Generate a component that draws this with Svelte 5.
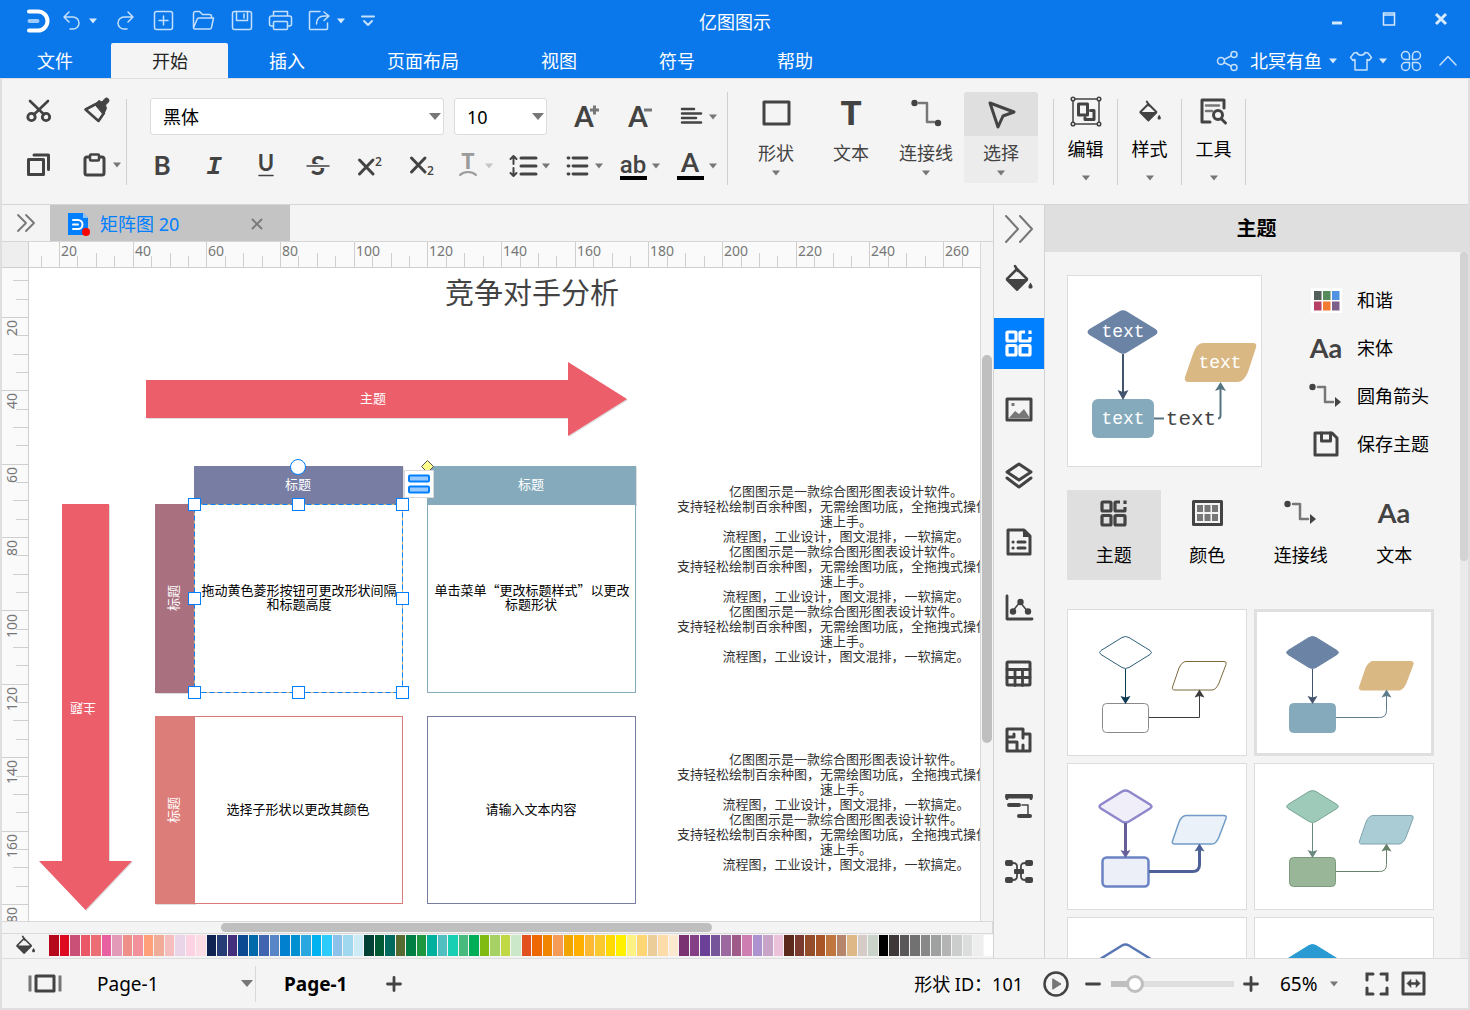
<script>
  const icons = {
    logo: '<path d="M3 3.500h9a9.500 9.500 0 0 1 0 19H3" stroke="#fff" stroke-width="4"/><path d="M3.500 13h8" stroke="#9dcbfb" stroke-width="4"/>',
    undo: '<path d="M7 2L2 7l5 5M2 7h9a6 6 0 0 1 0 12H8"/>',
    redo: '<path d="M13 2l5 5-5 5M18 7H9a6 6 0 0 0 0 12h3"/>',
    add: '<rect x="1.500" y="1.500" width="18" height="18" rx="2"/><path d="M10.500 6v9M6 10.500h9"/>',
    open: '<path d="M2.500 18V3.500a2 2 0 0 1 2-2h4l3 3h7a2 2 0 0 1 2 2V8M2.500 18L6 9.500a2 2 0 0 1 2-1.500h14.500l-2 9.500a2 2 0 0 1-2 1.500H3.500a1 1 0 0 1-1-1z"/>',
    save: '<rect x="1.500" y="1.500" width="19" height="18" rx="2"/><path d="M5.500 1.500v9h11v-9M13 4v4"/>',
    print: '<path d="M5.500 6V1.500h14V6M5.500 16h-2a2 2 0 0 1-2-2V8a2 2 0 0 1 2-2h18a2 2 0 0 1 2 2v6a2 2 0 0 1-2 2h-2"/><rect x="5.500" y="11.500" width="14" height="8" rx="1"/>',
    share: '<path d="M12 1.500H2.500a1 1 0 0 0-1 1v16a1 1 0 0 0 1 1h16a1 1 0 0 0 1-1V13M8.500 14c0-5 3-8 8-8h3M16 2l5 4-5 4.500"/>',
    more: '<path d="M1 1.500h12" stroke-width="2"/><path d="M3 6l4 4 4-4" stroke-width="2"/>',
    network: '<circle cx="5" cy="11" r="3.500"/><circle cx="18" cy="4.500" r="3"/><circle cx="18" cy="17.500" r="3"/><path d="M8 9.500l7-3.500M8 12.500l7 3.500"/>',
    shirt: '<path d="M7 1.500c1 3.500 7 3.500 8 0l3 .5 3.500 4.500-2.500 3-2-1V19H5V8.500l-2 1-2.500-3L4 2z"/>',
    apps: '<path d="M9.500 9.500H5.500a4 4 0 1 1 4-4zM12.500 9.500v-4a4 4 0 1 1 4 4zM9.500 12.500v4a4 4 0 1 1-4-4zM12.500 12.500h4a4 4 0 1 1-4 4z"/>',
    up: '<path d="M1 10l8-8.500L17 10"/>',
    cut: '<path d="M4 2L18 15.500M22 2L8 15.500" stroke-width="2.600"/><circle cx="5.500" cy="18" r="3.700" stroke-width="2.800"/><circle cx="20" cy="18" r="3.700" stroke-width="2.800"/>',
    brush: '<path d="M2.500 11.500L13 6l8 9-5.500 8z" stroke-width="2.600"/><path d="M12 6l4-3.500 3 1.500 3-3.500a2.500 2.500 0 0 1 3.500 3.500l-3 3 1 3.500-3 6z" fill="currentColor" stroke-width="1"/>',
    copy: '<rect x="1.500" y="6.500" width="15" height="15" stroke-width="3"/><path d="M7 2h14.500v14.500" stroke-width="3"/>',
    paste: '<rect x="2" y="4" width="19" height="18" rx="2" stroke-width="3"/><rect x="7" y="1.500" width="9" height="6" rx="1" fill="#f4f4f4" stroke-width="2.500"/>',
    bold: '<text x="12" y="21" text-anchor="middle" font-family="Lato" font-weight="700" font-size="26">B</text>',
    italic: '<text x="12" y="20" text-anchor="middle" font-family="Liberation Mono" font-weight="700" font-style="italic" font-size="26">I</text>',
    underline: '<text x="12" y="17" text-anchor="middle" font-family="Lato" font-weight="700" font-size="22">U</text><path d="M5 21.500h14" stroke-width="1.500"/>',
    strike: '<text x="12" y="21" text-anchor="middle" font-family="Lato" font-weight="700" font-size="26">S</text><path d="M1 12h22" stroke="#f4f4f4" stroke-width="4"/><path d="M1 12h22" stroke-width="1.500"/>',
    sup: '<path d="M1.500 6L15 20M15 6L1.500 20" stroke-width="3"/><text x="17" y="12" font-family="Open Sans" font-weight="600" font-size="12">2</text>',
    sub: '<path d="M1.500 4L15 18M15 4L1.500 18" stroke-width="3"/><text x="17" y="21" font-family="Open Sans" font-weight="600" font-size="12">2</text>',
    textfx: '<text x="12" y="15" text-anchor="middle" font-family="Liberation Mono" font-weight="700" font-size="23">T</text><path d="M4 21c4-4 12-4 16 0" stroke-width="2"/>',
    spacing: '<path d="M12 4h15M12 12h15M12 20h15" stroke-width="3"/><path d="M4.500 3v7M1.500 5l3-3 3 3M4.500 14v7M1.500 19l3 3 3-3" stroke-width="2"/>',
    bullets: '<path d="M7 4h14M7 12h14M7 20h14" stroke-width="2.800"/><path d="M2 4h1M2 12h1M2 20h1" stroke-width="2.800"/>',
    highlight: '<text x="14" y="21" text-anchor="middle" font-family="Roboto" font-weight="500" font-size="24">ab</text><path d="M1 26h27" stroke="#000" stroke-width="4" stroke-linecap="butt"/>',
    fontcolor: '<text x="14" y="20" text-anchor="middle" font-family="Lato" font-weight="700" font-size="26">A</text><path d="M1 26h27" stroke="#000" stroke-width="4" stroke-linecap="butt"/>',
    bigger: '<text x="10" y="22" text-anchor="middle" font-family="Lato" font-weight="700" font-size="28">A</text><path d="M16 5h9M20.500 0.500v9" stroke="#777" stroke-width="3" stroke-linecap="butt"/>',
    smaller: '<text x="12" y="22" text-anchor="middle" font-family="Lato" font-weight="700" font-size="28">A</text><path d="M18 5h8" stroke="#777" stroke-width="3" stroke-linecap="butt"/>',
    align: '<path d="M4 3h12M4 7.500h19M4 12h14M4 16.500h19" stroke-width="2.500"/>',
    shape: '<rect x="3" y="3" width="25" height="22" stroke-width="3"/>',
    text: '<text x="15" y="26" text-anchor="middle" font-family="Liberation Mono" font-weight="700" font-size="37">T</text>',
    connector: '<path d="M8 3h8v19h7" stroke="#777" stroke-width="2.500"/><circle cx="3.500" cy="3" r="3.200" fill="currentColor" stroke="none"/><circle cx="27" cy="23" r="3.200" fill="currentColor" stroke="none"/>',
    pointer: '<path d="M3 3l24 9-11 4-5 11z" stroke-width="3"/>',
    edit: '<rect x="3" y="3" width="26" height="25" stroke-width="1.500"/><g fill="#f4f4f4" stroke-width="1.500"><circle cx="3" cy="3" r="1.800"/><circle cx="29" cy="3" r="1.800"/><circle cx="3" cy="28" r="1.800"/><circle cx="29" cy="28" r="1.800"/></g><rect x="8.500" y="8" width="9" height="11" stroke-width="3"/><path d="M20.500 14.500h3.500v9h-9v-2" stroke-width="3"/>',
    bucket: '<path d="M13 5L3 15l4 3h12l4-3z" stroke-width="2.500"/><path d="M3 16h20L13 26z" fill="currentColor" stroke-width="2"/><path d="M11 2l3 5" stroke-width="2.500"/><path d="M26.500 18.500c3 4 2.500 6 0 6s-3-2 0-6z" fill="currentColor" stroke="none"/>',
    tools: '<path d="M11 25H3V3h22v8" stroke-width="3"/><path d="M7 8.500h13M7 14h6" stroke="#777" stroke-width="2.500"/><circle cx="19" cy="18" r="4.500" stroke-width="3"/><path d="M22.500 22l4 4" stroke-width="3"/>',
    expand: '<path d="M3 3l8 8-8 8M11 3l8 8-8 8" stroke-width="1.800"/>',
    expandbig: '<path d="M2 2l12 13L2 28M16 2l12 13-12 13" stroke-width="2"/>',
    doc: '<path d="M0 0h15l5 5v17H0z" fill="#007fff" stroke="none"/><path d="M15 0l5 5h-5z" fill="#8fc6ff" stroke="none"/><path d="M5 7h5a4 4 0 0 1 0 9H5M5 11.500h5" stroke="#fff" stroke-width="2"/><circle cx="18" cy="19" r="4" fill="#f00" stroke="none"/>',
    close: '<path d="M1.500 1.500l9 9M10.500 1.500l-9 9" stroke-width="1.800"/>',
    theme: '<rect x="2" y="2" width="9" height="9" rx="1" stroke-width="3.200"/><path d="M20 2h-4a1 1 0 0 0-1 1v7a1 1 0 0 0 1 1h8a1 1 0 0 0 1-1V7" stroke-width="3.200" stroke-linecap="butt"/><path d="M25 0.500v3.500" stroke-width="3.200" stroke-linecap="butt"/><rect x="2" y="15.500" width="9" height="9.500" rx="1" stroke-width="3.200"/><rect x="15" y="15.500" width="10" height="9.500" rx="1" stroke-width="3.200"/>',
    image: '<rect x="2" y="2" width="24" height="21" stroke-width="3"/><path d="M4 21l6-7 4 3 5-5 6 9z" fill="#777" stroke="none"/><rect x="6.500" y="6" width="3" height="3" fill="#777" stroke="none"/>',
    layers: '<path d="M14 2L26 10 14 18 2 10z" stroke-width="3"/><path d="M2 16l12 9 12-9" stroke-width="3"/>',
    notes: '<path d="M2 2h16l6 6v18H2z" stroke-width="3"/><path d="M17 2v7h7z" fill="currentColor" stroke="none"/><path d="M12 14h7M12 20h7M7 14h0.100M7 20h0.100" stroke-width="3"/>',
    chart: '<path d="M2 2v23h25" stroke-width="2.800"/><path d="M7 18l8-10 8 10" stroke-width="1.500"/><g fill="currentColor" stroke="none"><circle cx="8" cy="17.500" r="3.200"/><circle cx="15.500" cy="8" r="3.200"/><circle cx="23" cy="17.500" r="3.200"/></g>',
    table: '<rect x="2" y="2" width="23" height="23" rx="1" stroke-width="3"/><path d="M2 9.500h23M2 17.500h23M10 9.500v16M17.500 9.500v16" stroke-width="2.800"/>',
    plan: '<path d="M2 2h16v5h7v17H2zM2 10h7V7M2 15h10v9M18 7v4M18 18v6" stroke-width="3"/>',
    gantt: '<path d="M2 5.500V2.500h24v3" stroke-width="3" stroke-linejoin="miter"/><path d="M2 3.500h24" stroke-width="4"/><path d="M17 12h6v9" stroke-width="1.500"/><path d="M4 12h10M14 23h11" stroke-width="4"/>',
    mind: '<g fill="currentColor" stroke="none"><rect x="0" y="1" width="8" height="6" rx="2"/><rect x="20" y="1" width="8" height="6" rx="2"/><rect x="0" y="18" width="8" height="6" rx="2"/><rect x="20" y="18" width="8" height="6" rx="2"/><rect x="9" y="10" width="10" height="5" rx="1"/></g><path d="M8 4c5 0 4 3 4 8s1 9-4 9M20 4c-5 0-4 3-4 8s-1 9 4 9" stroke-width="1.800"/>',
    swatches: '<rect x="0" y="0" width="31" height="25" fill="#fff" stroke="none"/><g stroke="none"><rect x="3" y="3" width="7.500" height="9" fill="#545f5c"/><rect x="12" y="3" width="7.500" height="9" fill="#568b5b"/><rect x="21" y="3" width="7.500" height="9" fill="#4f93e2"/><rect x="3" y="13.500" width="7.500" height="9" fill="#b54063"/><rect x="12" y="13.500" width="7.500" height="9" fill="#f37a31"/><rect x="21" y="13.500" width="7.500" height="9" fill="#7d5f8c"/></g>',
    font: '<text x="16" y="23" text-anchor="middle" font-family="Lato" font-weight="700" font-size="27">Aa</text>',
    route: '<path d="M9 4h7v15h8" stroke="#777" stroke-width="2.500"/><circle cx="3.500" cy="4" r="3.200" fill="currentColor" stroke="none"/><path d="M26 14l6 5-6 5z" fill="currentColor" stroke="none"/>',
    disk: '<path d="M2 2h17l5 5v17H2z" stroke-width="3"/><path d="M8.500 2v8h9V2" stroke-width="3"/>',
    colors: '<rect x="1.500" y="1.500" width="28" height="23" stroke-width="3"/><g fill="#777" stroke="none"><rect x="5" y="5" width="6" height="7"/><rect x="12.500" y="5" width="6" height="7"/><rect x="20" y="5" width="6" height="7"/><rect x="5" y="14" width="6" height="7"/><rect x="12.500" y="14" width="6" height="7"/><rect x="20" y="14" width="6" height="7"/></g>',
    pages: '<path d="M2 1.500v16M32 1.500v16" stroke="#777" stroke-width="3" stroke-linecap="butt"/><rect x="8" y="2" width="18" height="15" stroke-width="3"/>',
    plus: '<path d="M8 1.500v13M1.500 8h13" stroke-width="2.800"/>',
    minus: '<path d="M1.500 8h13" stroke-width="2.800"/>',
    play: '<circle cx="13" cy="13" r="11.500" stroke-width="2.500"/><path d="M10 8l8 5-8 5z" fill="#777" stroke="#777" stroke-width="1"/>',
    full: '<path d="M2 8V2h6M16 2h6v6M22 16v6h-6M8 22H2v-6" stroke-width="3" stroke-linejoin="miter"/>',
    fit: '<rect x="2" y="2" width="21" height="21" stroke-width="3"/><path d="M8 12.500h9" stroke-width="2.500"/><path d="M10 8.500v8l-4-4zM15 8.500v8l4-4z" fill="currentColor" stroke-width="0.500"/>'
  };

  const menus = ['插入', '页面布局', '视图', '符号', '帮助'];
  const rail = [['bucket', '填充', 30, 28], ['theme', '主题', 27, 27], ['image', '图片', 28, 25], ['layers', '图层', 28, 27], ['notes', '页面', 26, 28], ['chart', '图表', 28, 27], ['table', '表格', 27, 27], ['plan', '平面图', 27, 26], ['gantt', '甘特图', 28, 26], ['mind', '思维导图', 28, 25]];
  const options = [['swatches', '和谐', 31, 25], ['font', '宋体', 32, 26], ['route', '圆角箭头', 34, 26], ['disk', '保存主题', 26, 26]];
  const themeTabs = [['theme', '主题', 27, 27], ['colors', '颜色', 31, 26], ['route', '连接线', 34, 26], ['font', '文本', 32, 26]];

  const palette = ('b5081b dd0a20 cb5078 ea5766 ec6e74 e8609f e399b8 ef8f8a f2909b ffa07a f0ac96 f5bdbd ead5e8 fdd3e4 fddde5 0f2352 263c74 432f7c 0b4a90 0069aa 4164b0 5885c6 0080cf 0090d2 2ba7e0 00b3f0 2dcbfc 8cc1ea a0d8ef cdebf6 004035 005933 00695e 556b2f 007f45 1c963f 00b09f 51bec1 19cfb3 48ba7e 00ae57 80bb11 a5d165 bfd843 cbe8c8 e2501f ed6800 f18500 f39b57 f0a500 ffaf00 fdb933 fac92f ffd900 fff000 fdf283 ffd673 ebcd9a fedcaa fde8d0 7b3272 843f86 6a4196 77559b 9b689f a05a8a cf7eb2 ac92cf c8a4c9 ecc1da 5c2a1c 7a3a2f 944d2a a95528 c0773f b5866c dfb887 d6cbc6 cad3ca 000000 3e3838 595758 717171 888888 9fa0a0 b4b4b5 cccdcd dcdddd eeeeee ffffff').split(' ');

  const thumbs = [
    { d: ['#fff', '#2f6079'], p: ['#fff', '#7b6a3d'], r: ['#fff', '#8a8a8a'], a: '#0c3a53', b: '#3d3d3d', w: 1, lw: 1, bend: 0 },
    { d: ['#6b83a4', '#6b83a4'], p: ['#d9b884', '#d9b884'], r: ['#84aabc', '#84aabc'], a: '#44546c', b: '#5d7d8b', w: 1, lw: 1, bend: 7, on: true },
    { d: ['#f0eff9', '#8f87cc'], p: ['#ebf1f9', '#719cc7'], r: ['#eceff8', '#6b83c4'], a: '#675f9b', b: '#4d6196', w: 2.5, lw: 3, bend: 7 },
    { d: ['#9dcab9', '#78a594'], p: ['#a9ccd5', '#7fa3ac'], r: ['#99b798', '#7b9b7b'], a: '#6a8a80', b: '#66806a', w: 1, lw: 1, bend: 7 },
    { d: ['#fff', '#5776b4'], p: ['#fff', '#5776b4'], r: ['#fff', '#5776b4'], a: '#44546c', b: '#44546c', w: 2.5, lw: 2, bend: 7 },
    { d: ['#299bd2', '#299bd2'], p: ['#299bd2', '#299bd2'], r: ['#299bd2', '#299bd2'], a: '#44546c', b: '#44546c', w: 1, lw: 1, bend: 7 }
  ];

  const A = '亿图图示是一款综合图形图表设计软件。';
  const B = '支持轻松绘制百余种图，无需绘图功底，全拖拽式操作，快';
  const block = [A, B, '速上手。', '流程图，工业设计，图文混排，一软搞定。'];
  const upper = [...block, ...block, ...block];
  const lower = [...block, ...block];

  const handles = [[194, 504], [298, 504], [402, 504], [194, 598], [402, 598], [194, 692], [298, 692], [402, 692]];
  const ticks = Array.from({ length: 120 }, (_, i) => i - 4);
  const tickStart = (i) => (i % 4 === 0 ? 0 : i % 2 === 0 ? 11 : 14);
  const across = Array.from({ length: 13 }, (_, i) => i);
  const down = Array.from({ length: 9 }, (_, i) => i);

  let font = $state('黑体');
  let size = $state('10');
  let page = $state('Page-1');
  let zoom = $state('65%');
  let level = $state(14);
</script>

{#snippet icon(name, w, h, scale = 1)}
  <svg class="icon" width={w * scale} height={h * scale} viewBox="0 0 {w} {h}" aria-hidden="true">{@html icons[name]}</svg>
{/snippet}

{#snippet caret()}
  <svg class="caret" width="10" height="6" viewBox="0 0 10 6" aria-hidden="true"><path d="M1 0.500h8L5 5.500z" /></svg>
{/snippet}

{#snippet flow(t)}
  <path d="M55 28.500Q58.500 26.500 62 28.500L83 41.500Q86 43.500 83 45.500L62 58.500Q58.500 60.500 55 58.500L34 45.500Q31 43.500 34 41.500z" fill={t.d[0]} stroke={t.d[1]} stroke-width={t.w} />
  <path d="M119 52.500H157Q160 52.500 159 55.500L152 74Q149 81 145 81H108Q104.500 81 105.500 78L112 59Q115 52.500 119 52.500z" fill={t.p[0]} stroke={t.p[1]} stroke-width={Math.min(t.w, 1.5)} />
  <rect x="35.500" y="94.500" width="46" height="29" rx="4" fill={t.r[0]} stroke={t.r[1]} stroke-width={t.w} />
  <path d="M58.500 60V90" stroke={t.a} stroke-width={t.lw} fill="none" />
  <path d="M53.500 87l5 1.500 5-1.500-5 8z" fill={t.a} />
  <path d="M82 108.500H{132.500 - t.bend}q{t.bend} 0 {t.bend} -{t.bend}V86" stroke={t.b} stroke-width={t.lw} fill="none" />
  <path d="M127.500 88.500l5-1.500 5 1.500-5-8z" fill={t.b} />
{/snippet}

<div class="app">
  <header>
    <div class="titlebar">
      <div class="quick">
        {@render icon('logo', 24, 26)}
        <button class="split undo" aria-label="撤销">{@render icon('undo', 20, 21)}{@render caret()}</button>
        <button class="q" aria-label="重做">{@render icon('redo', 20, 21)}</button>
        <button class="q" aria-label="新建">{@render icon('add', 21, 21)}</button>
        <button class="q" aria-label="打开">{@render icon('open', 24, 21)}</button>
        <button class="q" aria-label="保存">{@render icon('save', 22, 21)}</button>
        <button class="q" aria-label="打印">{@render icon('print', 25, 21)}</button>
        <button class="split export" aria-label="导出">{@render icon('share', 22, 21)}{@render caret()}</button>
        <button aria-label="更多">{@render icon('more', 14, 12)}</button>
      </div>
      <h1>亿图图示</h1>
      <div class="window">
        <button aria-label="最小化"><svg width="14" height="14" viewBox="0 0 14 14"><path d="M2 11h10" stroke="#d5e8fc" stroke-width="3" /></svg></button>
        <button aria-label="最大化"><svg width="14" height="14" viewBox="0 0 14 14"><path d="M1.500 1h11v12h-11zM1 3h12" fill="none" stroke="#d5e8fc" stroke-width="1.500" /></svg></button>
        <button aria-label="关闭"><svg width="14" height="14" viewBox="0 0 14 14"><path d="M2 2l10 10M12 2L2 12" stroke="#d5e8fc" stroke-width="3" /></svg></button>
      </div>
    </div>
    <nav class="menubar">
      <button class="file">文件</button>
      <button class="current">开始</button>
      {#each menus as m}<button>{m}</button>{/each}
      <div class="account">
        <button aria-label="分享">{@render icon('network', 22, 22)}</button>
        <button class="split name">北冥有鱼{@render caret()}</button>
        <button class="split" aria-label="皮肤">{@render icon('shirt', 22, 20)}{@render caret()}</button>
        <button class="apps" aria-label="应用">{@render icon('apps', 22, 22)}</button>
        <button aria-label="收起">{@render icon('up', 18, 12)}</button>
      </div>
    </nav>
  </header>

  <div class="frame">
    <section class="ribbon">
      <div class="clip">
        <button aria-label="剪切">{@render icon('cut', 26, 24)}</button>
        <button class="second" aria-label="格式刷">{@render icon('brush', 27, 26)}</button>
        <button aria-label="复制">{@render icon('copy', 24, 24)}</button>
        <button class="split second" aria-label="粘贴">{@render icon('paste', 23, 24)}{@render caret()}</button>
      </div>
      <div class="fonts">
        <div class="line">
          <label class="pick family"><select aria-label="字体" bind:value={font}><option>黑体</option><option>宋体</option></select><svg width="12" height="8" viewBox="0 0 12 8"><path d="M0 0h12L6 7z" /></svg></label>
          <label class="pick size"><select aria-label="字号" bind:value={size}><option>10</option><option>12</option></select><svg width="12" height="8" viewBox="0 0 12 8"><path d="M0 0h12L6 7z" /></svg></label>
          <div class="sizes">
            <button aria-label="增大字号">{@render icon('bigger', 26, 24)}</button>
            <button aria-label="减小字号">{@render icon('smaller', 26, 24)}</button>
            <button class="split" aria-label="对齐">{@render icon('align', 26, 22)}{@render caret()}</button>
          </div>
        </div>
        <div class="line">
          <div class="styles">
            {#each [['bold', '加粗'], ['italic', '斜体'], ['underline', '下划线'], ['strike', '删除线'], ['sup', '上标'], ['sub', '下标']] as [n, l]}
              <button aria-label={l}>{@render icon(n, 24, 24)}</button>
            {/each}
          </div>
          <div class="splits">
            <button class="split dim" aria-label="文字效果" disabled>{@render icon('textfx', 24, 24)}{@render caret()}</button>
            <button class="split" aria-label="行距">{@render icon('spacing', 28, 24)}{@render caret()}</button>
            <button class="split" aria-label="项目符号">{@render icon('bullets', 24, 24)}{@render caret()}</button>
            <button class="split" aria-label="突出显示">{@render icon('highlight', 28, 28)}{@render caret()}</button>
            <button class="split" aria-label="字体颜色">{@render icon('fontcolor', 28, 28)}{@render caret()}</button>
          </div>
        </div>
      </div>
      <div class="tools">
        <button>{@render icon('shape', 30, 30)}<span>形状</span>{@render caret()}</button>
        <button>{@render icon('text', 30, 31)}<span>文本</span></button>
        <button>{@render icon('connector', 30, 28)}<span>连接线</span>{@render caret()}</button>
        <button class="chosen">{@render icon('pointer', 28, 29)}<span>选择</span>{@render caret()}</button>
      </div>
      <div class="more">
        <button>{@render icon('edit', 32, 31)}<span>编辑</span>{@render caret()}</button>
        <button>{@render icon('bucket', 30, 28, 0.8)}<span>样式</span>{@render caret()}</button>
        <button>{@render icon('tools', 29, 29)}<span>工具</span>{@render caret()}</button>
      </div>
    </section>

    <main>
      <section class="work">
        <div class="doctabs">
          <button class="open" aria-label="展开">{@render icon('expand', 22, 22)}</button>
          <div class="doctab">
            {@render icon('doc', 23, 22)}
            <span>矩阵图 20</span>
            <button aria-label="关闭文档">{@render icon('close', 12, 12)}</button>
          </div>
        </div>
        <div class="board">
          <div class="corner"></div>
          <div class="ruler across">
            <svg width="100%" height="25">
              {#each ticks as i}
                <path d="M{Math.floor(30.5 + i * 18.42) + 0.5} {tickStart(i)}V25" stroke="#cfcfcf" />
              {/each}
              {#each across as i}<text x={32 + Math.round(i * 73.68)} y="14">{20 + i * 20}</text>{/each}
            </svg>
          </div>
          <div class="ruler down">
            <svg width="26" height="100%">
              {#each ticks as i}
                <path d="M{tickStart(i)} {Math.floor(49.5 + i * 18.34) + 0.5}H26" stroke="#cfcfcf" />
              {/each}
              {#each down as i}<text text-anchor="end" transform="translate(15 {52 + Math.round(i * 73.4)}) rotate(-90)">{20 + i * 20}</text>{/each}
            </svg>
          </div>
          <div class="canvas">
            <svg width="100%" height="100%">
              <g transform="translate(-29 -268)">
                <text class="heading" x="532" y="304">竞争对手分析</text>
                <g class="solid">
                  <path d="M146 380H568V362L627 399L568 436V418H146z" fill="#ed5e6b" />
                  <path d="M62 504H109V861H132L85.500 910L39 861H62z" fill="#ed5e6b" />
                  <path d="M194 466h209v39h-209z" fill="#777da3" />
                  <path d="M427 466h209v39h-209z" fill="#85aabc" />
                  <path d="M155 504h40v189h-40z" fill="#a9707f" />
                  <path d="M155 716h40v188h-40z" fill="#dd7d7a" />
                </g>
                <rect x="427.500" y="504.500" width="208" height="188" class="box" stroke="#85aabc" />
                <rect x="194.500" y="716.500" width="208" height="187" class="box" stroke="#d87b79" />
                <rect x="427.500" y="716.500" width="208" height="187" class="box" stroke="#777da3" />
                <rect x="194.500" y="504.500" width="208" height="188" class="box" stroke="#d9b884" />
                <g class="light">
                  <text x="373" y="403">主题</text>
                  <text transform="translate(83 704) rotate(180)">主题</text>
                  <text x="298" y="489">标题</text>
                  <text x="531" y="489">标题</text>
                  <text transform="translate(178 598) rotate(-90)">标题</text>
                  <text transform="translate(178 810) rotate(-90)">标题</text>
                </g>
                <g class="dark">
                  <text x="299" y="595">拖动黄色菱形按钮可更改形状间隔</text>
                  <text x="299" y="609">和标题高度</text>
                  <text x="532" y="595">单击菜单“更改标题样式”以更改</text>
                  <text x="531" y="609">标题形状</text>
                  <text x="298" y="814">选择子形状以更改其颜色</text>
                  <text x="531" y="814">请输入文本内容</text>
                </g>
                <g class="body">
                  {#each upper as line, i}<text x="846" y={496 + i * 15}>{line}</text>{/each}
                  {#each lower as line, i}<text x="846" y={764 + i * 15}>{line}</text>{/each}
                </g>
                <path d="M427.500 460.500l6 6-6 6-6-6z" fill="#ffff8c" stroke="#555" />
                <rect x="404.500" y="470.500" width="29" height="27" fill="#fff" stroke="#d9d9d9" />
                <rect x="409" y="475.500" width="20" height="6" rx="1" class="bar" />
                <rect x="409" y="486.500" width="20" height="6" rx="1" class="bar" />
                <rect x="194.500" y="504.500" width="208" height="188" class="selection" />
                <circle cx="298" cy="467" r="7.500" class="handle" />
                {#each handles as [x, y]}<rect x={x - 5.5} y={y - 5.5} width="12" height="12" class="handle" />{/each}
              </g>
            </svg>
          </div>
          <div class="vscroll"><i></i></div>
          <div class="hscroll"><i></i></div>
        </div>
        <div class="palette">
          <button class="fill" aria-label="填充颜色">{@render icon('bucket', 30, 28, 0.7)}</button>
          <div class="chips">{#each palette as c}<button aria-label="#{c}" style="background:#{c}"></button>{/each}</div>
        </div>
      </section>

      <aside class="rail">
        <button class="top" aria-label="收起面板">{@render icon('expandbig', 30, 30)}</button>
        {#each rail as [n, l, w, h], i}<button class:on={i === 1} aria-label={l}>{@render icon(n, w, h)}</button>{/each}
      </aside>

      <aside class="panel">
        <h2>主题</h2>
        <div class="scroll">
          <div class="inner">
            <div class="summary">
              <div class="preview">
                <svg width="193" height="190" viewBox="1 1 193 190">
                  <path d="M52 36.500Q56 34 60 36.500L88.500 54Q92.500 57 88.500 60L60 77.500Q56 80 52 77.500L22.500 60Q18.500 57 22.500 54z" fill="#6b83a4" />
                  <path d="M136 68H186Q190.500 68 189 72.500L181 97Q177 107 170 107H122Q116.500 107 118 102L126 79Q129.500 68 136 68z" fill="#d9b884" />
                  <rect x="25" y="124" width="62" height="39" rx="6" fill="#84aabc" />
                  <path d="M56 79V119" stroke="#44546c" stroke-width="2" />
                  <path d="M50.500 115l5.500 2 5.500-2L56 125z" fill="#44546c" />
                  <path d="M87 143.500h10M151 143.500q2.500 0 2.500-3V112" fill="none" stroke="#557480" stroke-width="2" />
                  <path d="M148 116l5.500-2 5.500 2-5.500-9z" fill="#557480" />
                  <text class="mono" x="56" y="62">text</text>
                  <text class="mono" x="153" y="93">text</text>
                  <text class="mono" x="56" y="149">text</text>
                  <text class="mono large" x="124" y="150">text</text>
                </svg>
              </div>
              <div class="options">
                {#each options as [n, l, w, h]}
                  <button><span class="slot">{@render icon(n, w, h)}</span>{l}</button>
                {/each}
              </div>
            </div>
            <div class="tabs">
              {#each themeTabs as [n, l, w, h], i}
                <button class:on={i === 0}><span class="slot">{@render icon(n, w, h)}</span>{l}</button>
              {/each}
            </div>
            <div class="thumbs">
              {#each thumbs as t, i}
                <button class:on={t.on} aria-label="主题 {i + 1}"><svg width="180" height="147" viewBox="0 0 180 147">{@render flow(t)}</svg></button>
              {/each}
            </div>
          </div>
          <div class="bar"><i></i></div>
        </div>
      </aside>
    </main>

    <footer>
      <button class="view" aria-label="页面视图">{@render icon('pages', 34, 19)}</button>
      <label class="pages"><select aria-label="页面" bind:value={page}><option>Page-1</option></select><svg width="12" height="8" viewBox="0 0 12 8"><path d="M0 0h12L6 7z" /></svg></label>
      <button class="pagetab">Page-1</button>
      <button aria-label="新增页面">{@render icon('plus', 16, 16)}</button>
      <div class="right">
        <span>形状 ID：101</span>
        <button class="play" aria-label="播放">{@render icon('play', 26, 26)}</button>
        <button aria-label="缩小">{@render icon('minus', 16, 16)}</button>
        <input type="range" aria-label="缩放" min="0" max="100" bind:value={level} />
        <button aria-label="放大">{@render icon('plus', 16, 16)}</button>
        <label class="zoom"><select aria-label="缩放比例" bind:value={zoom}><option>65%</option><option>100%</option></select>{@render caret()}</label>
        <button aria-label="全屏">{@render icon('full', 24, 24)}</button>
        <button aria-label="适应宽度">{@render icon('fit', 25, 25)}</button>
      </div>
    </footer>
  </div>
</div>

<style>
  :global(body) { margin: 0; }
  .app { height: 100vh; min-height: 800px; display: flex; flex-direction: column; overflow: hidden; background: #f4f4f4; color: #000; font: 18px/24px "Noto Sans", "Noto Sans CJK SC", sans-serif; }
  .app * { box-sizing: border-box; }
  button { border: 0; padding: 0; margin: 0; background: none; font: inherit; color: #434343; display: flex; align-items: center; justify-content: center; flex: none; white-space: nowrap; }
  svg { display: block; flex: none; }
  .icon { fill: none; stroke: currentColor; stroke-width: 1.5; stroke-linecap: round; stroke-linejoin: round; overflow: visible; }
  .icon :global(text) { fill: currentColor; stroke: none; }
  .caret { fill: #777; }
  .split { gap: 4px; }

  header { background: #0a78eb; color: #fff; flex: none; }
  header button { color: #c4dffb; }
  header .caret { fill: #d5e8fc; }
  .titlebar { height: 43px; display: grid; grid-template-columns: 1fr auto 1fr; align-items: center; }
  .quick { display: flex; align-items: center; padding: 0 0 2px 26px; }
  .undo { margin: 0 7px 0 12px; gap: 6px; }
  .q { width: 39px; }
  .export { padding: 0 15px 0 8px; gap: 6px; }
  h1 { margin: 0; font-size: 18px; font-weight: 400; line-height: 24px; }
  .window { display: flex; justify-content: flex-end; align-items: center; gap: 38px; padding: 0 22px 6px 0; }
  .menubar { height: 35px; display: flex; align-items: stretch; }
  .menubar > button { color: #fff; padding: 0 41px; }
  .menubar > .file { padding: 0 38px 0 37px; }
  .menubar > .current { background: #f4f4f4; color: #222; border-radius: 2px 2px 0 0; padding: 0 40px 0 41px; }
  .account { margin-left: auto; display: flex; align-items: center; gap: 12px; padding-right: 13px; }
  .account .split { gap: 6px; }
  .account .name { color: #fff; }
  .account .apps { margin-right: 5px; }

  .frame { flex: 1; min-height: 0; display: flex; flex-direction: column; border: 2px solid #dfdfdf; border-top-width: 1px; }
  .ribbon { flex: none; display: flex; height: 126px; border-bottom: 1px solid #d6d6d6; padding-top: 13px; }
  .clip { display: grid; grid-template-columns: 48px 40px; column-gap: 20px; grid-template-rows: 24px 24px; row-gap: 30px; width: 125px; height: 86px; margin-top: 7px; padding-left: 13px; border-right: 1px solid #d0d0d0; align-content: start; align-items: center; }
  .clip .second { justify-content: flex-start; }
  .clip .split { gap: 6px; }
  .fonts { display: flex; flex-direction: column; gap: 17px; padding: 6px 9px 0 23px; height: 93px; border-right: 1px solid #d0d0d0; }
  .line { display: flex; align-items: center; }
  .pick { position: relative; display: block; border: 1px solid #dcdcdc; border-radius: 3px; background: #fff; height: 37px; }
  .family { width: 294px; margin-right: 10px; }
  .size { width: 93px; }
  select { appearance: none; border: 0; background: transparent; font: inherit; width: 100%; height: 100%; padding: 0 12px; color: #000; }
  .pick svg, .pages svg { position: absolute; right: 2px; top: 14px; fill: #777; pointer-events: none; }
  .sizes { display: flex; align-items: center; gap: 26px; margin-left: 27px; }
  .styles { display: flex; gap: 28px; height: 28px; margin-right: 22px; }
  .splits { display: flex; align-items: center; gap: 15px; }
  .dim { color: #9a9a9a; }
  .dim .caret { fill: #c4c4c4; }
  .tools { display: flex; gap: 1px; padding: 0 15px 0 11px; }
  .tools button { width: 74px; height: 91px; display: grid; grid-template-rows: 44px 34px 13px; justify-items: center; align-items: center; border-radius: 3px; }
  .tools .chosen { background: linear-gradient(#dfdfdf 44px, #ececec 44px); }
  .tools .caret { align-self: start; }
  .more { display: flex; height: 86px; margin-top: 7px; border-left: 1px solid #d0d0d0; }
  .more button { width: 64px; border-right: 1px solid #d0d0d0; display: grid; grid-template-rows: 24px 52px 6px; align-content: start; justify-items: center; align-items: center; }
  .more span { color: #000; }

  main { flex: 1; min-height: 0; display: flex; }
  .work { flex: 1; min-width: 0; display: flex; flex-direction: column; }
  .doctabs { display: flex; height: 37px; border-bottom: 1px solid #d6d6d6; flex: none; }
  .doctabs .open { width: 48px; color: #777; }
  .doctab { width: 240px; background: #c4c4c4; display: flex; align-items: center; padding: 1px 27px 0 18px; color: #007fff; }
  .doctab span { margin-left: 9px; flex: 1; }
  .doctab button { color: #777; }
  .board { flex: 1; min-height: 0; display: grid; grid-template-columns: 27px 1fr 13px; grid-template-rows: 26px 1fr 13px; }
  .corner { background: #eee; border-right: 1px solid #cfcfcf; border-bottom: 1px solid #cfcfcf; }
  .ruler { background: #fafafa; overflow: hidden; min-width: 0; min-height: 0; }
  .ruler text { font-size: 14px; fill: #777; }
  .across { border-bottom: 1px solid #cfcfcf; }
  .down { border-right: 1px solid #cfcfcf; grid-row: 2; }
  .canvas { grid-column: 2; grid-row: 2; background: #fff; overflow: hidden; min-width: 0; min-height: 0; font-family: "Noto Sans CJK SC", sans-serif; font-size: 13px; text-anchor: middle; }
  .heading { font-size: 29px; fill: #434343; }
  .solid { filter: drop-shadow(1px 1px 0 rgba(120, 120, 120, 0.25)); }
  .box { fill: #fff; }
  .light { fill: #fff; }
  .body { fill: #333; }
  .canvas .bar { fill: #99caff; stroke: #0080ff; stroke-width: 2; }
  .selection { fill: none; stroke: #0080ff; stroke-width: 1; stroke-dasharray: 5 3; }
  .handle { fill: #fff; stroke: #0080ff; }
  .vscroll { grid-column: 3; grid-row: 1 / 3; border-left: 1px solid #d9d9d9; padding: 113px 1px 0 1px; }
  .vscroll i { display: block; height: 388px; border-radius: 5px; background: #bfbfbf; }
  .hscroll { grid-column: 1 / 4; border: 1px solid #d9d9d9; border-left: 0; padding: 1px 280px 0 219px; }
  .hscroll i { display: block; height: 9px; border-radius: 5px; background: #bfbfbf; }
  .palette { height: 24px; flex: none; display: flex; align-items: center; padding-bottom: 2px; }
  .fill { width: 47px; }
  .chips { flex: 1; display: flex; gap: 1px; height: 21px; }
  .chips button { flex: 1; }

  .rail { width: 52px; flex: none; border: 1px solid #d3d3d3; border-width: 0 1px; display: flex; flex-direction: column; gap: 15px; overflow: hidden; }
  .rail button { height: 51px; padding-right: 1px; }
  .rail .top { height: 47px; margin-bottom: -15px; color: #777; }
  .rail .on { background: #007fff; color: #fff; }
  .panel { width: 423px; flex: none; display: flex; flex-direction: column; min-height: 0; }
  h2 { margin: 0; height: 47px; flex: none; background: #dfdfdf; font-size: 20px; line-height: 48px; font-weight: 700; text-align: center; }
  .scroll { flex: 1; min-height: 0; display: flex; overflow: hidden; }
  .inner { flex: 1; padding: 23px 19px 0 22px; }
  .summary { display: flex; justify-content: space-between; }
  .preview { width: 195px; height: 192px; border: 1px solid #dcdcdc; background: #fff; }
  .mono { font: 18px "Liberation Mono", monospace; text-anchor: middle; fill: #fff; }
  .mono.large { font-size: 21px; fill: #434343; }
  .options { width: 132px; display: grid; grid-template-rows: repeat(4, 48px); padding-top: 1px; }
  .options button { justify-content: flex-start; color: #000; }
  .options .slot { width: 34px; margin-right: 14px; display: flex; justify-content: center; color: #434343; }
  .tabs { display: grid; grid-template-columns: repeat(4, 1fr); margin-top: 22px; }
  .tabs button { height: 90px; display: grid; grid-template-rows: 46px 38px; align-content: start; justify-items: center; align-items: center; color: #000; }
  .tabs .on { background: #dfdfdf; }
  .tabs .slot { color: #434343; }
  .thumbs { display: grid; grid-template-columns: repeat(2, 180px); gap: 7px; margin-top: 29px; }
  .thumbs button { height: 147px; background: #fff; box-shadow: inset 0 0 0 1px #dcdcdc; }
  .thumbs .on { box-shadow: inset 0 0 0 3px #dfdfdf; }
  .scroll .bar { width: 8px; background: #eaeaea; }
  .scroll .bar i { display: block; height: 309px; border-radius: 4px; background: #d3d3d3; }

  footer { height: 50px; flex: none; border-top: 1px solid #dcdcdc; display: flex; align-items: center; }
  .view { margin-left: 26px; }
  .pages { position: relative; width: 171px; height: 36px; margin-left: 23px; border-right: 1px solid #d9d9d9; }
  .pages, .pagetab, .zoom { font-size: 19px; }
  .pagetab { margin: 0 39px 0 28px; font-weight: 700; color: #000; }
  .right { margin-left: auto; display: flex; align-items: center; padding-right: 42px; }
  .right .play { margin: 0 16px 0 20px; }
  input { appearance: none; width: 123px; height: 18px; margin: 0 9px 0 10px; background: linear-gradient(90deg, #bfbfbf 20px, #dfdfdf 20px) center / 100% 6px no-repeat; border-radius: 3px; }
  input::-webkit-slider-thumb { appearance: none; width: 18px; height: 18px; border-radius: 50%; background: #fff; border: 3px solid #bfbfbf; }
  .zoom { display: flex; align-items: center; margin: 0 26px 0 21px; }
  .zoom select { width: 49px; padding: 0; }
  .right button + button { margin-left: 12px; }
  .right .play + button { margin-left: 0; }
</style>
